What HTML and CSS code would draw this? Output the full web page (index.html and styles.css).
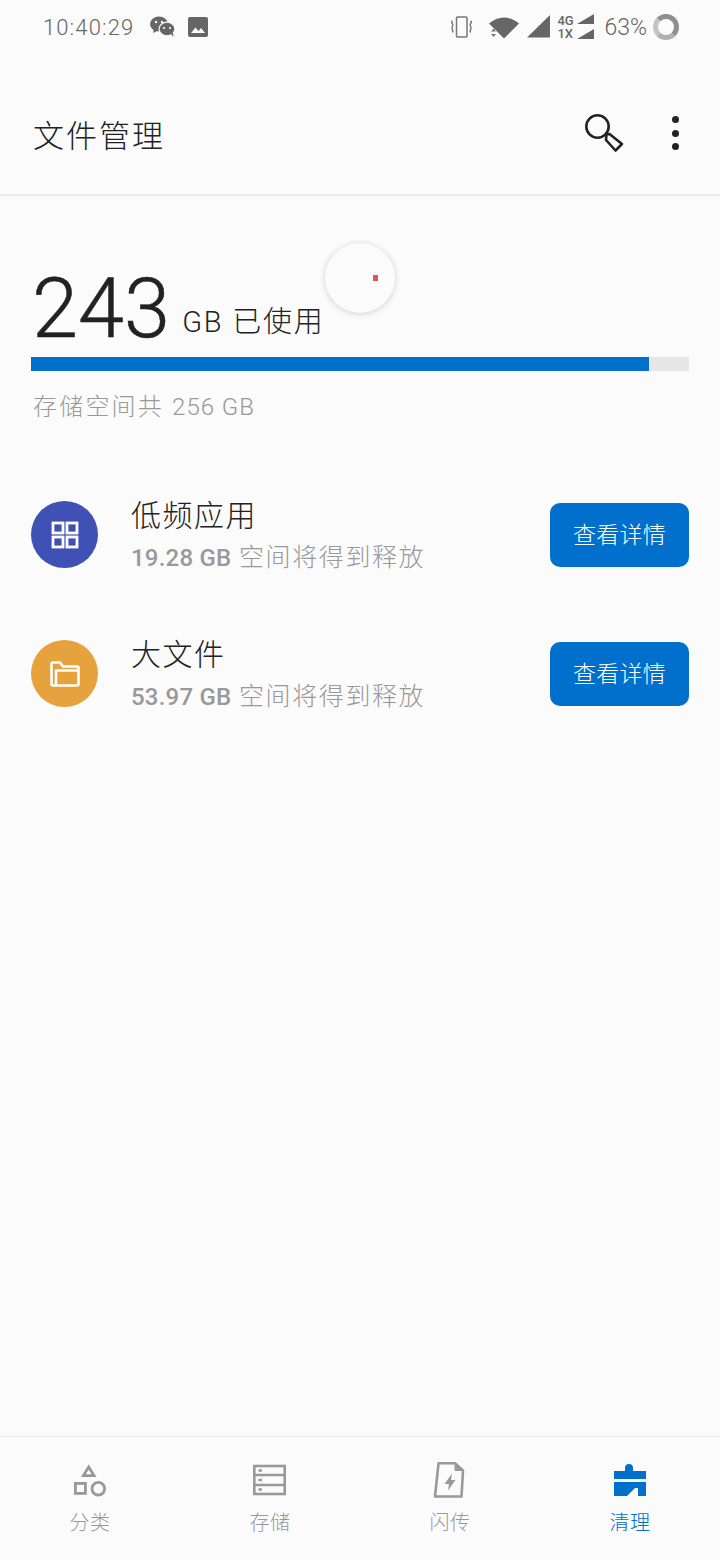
FILE: index.html
```html
<!DOCTYPE html>
<html>
<head>
    <meta charset="UTF-8"/>
    <title>文件管理</title>
    <link rel="stylesheet" href="styles.css">
</head>
<body>
<div class="page">
    <div class="status">
        <div class="status-left">
            <span class="clock">10:40:29</span>
            <svg class="ic-wechat" width="26" height="22" viewBox="0 0 26 22">
                <ellipse cx="9" cy="8" rx="9" ry="7.600" fill="#666"/>
                <path d="M4 13l-1 4 5-2.500z" fill="#666"/>
                <ellipse cx="17" cy="13" rx="8" ry="6.800" fill="#666" stroke="#fbfbfb" stroke-width="1.200"/>
                <path d="M21 18l2.500 3-.5-4.500z" fill="#666"/>
                <circle cx="6" cy="6" r="1.200" fill="#fbfbfb"/>
                <circle cx="12" cy="6" r="1.200" fill="#fbfbfb"/>
                <circle cx="14" cy="12" r="1.100" fill="#fbfbfb"/>
                <circle cx="20" cy="12" r="1.100" fill="#fbfbfb"/>
            </svg>
            <svg width="20" height="20" viewBox="0 0 20 20">
                <rect width="20" height="20" rx="2" fill="#666"/>
                <path d="M3 16l4.500-5.500 3 3.500 2.500-3 4 5z" fill="#fbfbfb"/>
            </svg>
        </div>
        <div class="status-right">
            <svg width="24" height="22" viewBox="0 0 24 22" fill="none" stroke="#777" stroke-width="1.500">
                <rect x="6.500" y="1" width="10.500" height="20" rx="1"/>
                <path d="M2.500 5c-2.500 1.500 2 3.500 0 5.500s1.500 3 0 6M20.500 5c2.500 1.500-2 3.500 0 5.500s-1.500 3 0 6"/>
            </svg>
            <svg class="ic-wifi" width="32" height="24" viewBox="0 0 32 24">
                <path d="M1 8.500C10 .5 22 .5 31 8.500L16 23.500z" fill="#666"/>
                <path d="M3 16.500l2.500-3 2.500 3zM3 19l2.500 3 2.500-3z" fill="#777"/>
            </svg>
            <svg class="ic-signal" width="24" height="24" viewBox="0 0 24 24">
                <path d="M0 22.500L23 0v22.500z" fill="#666"/>
            </svg>
            <div class="net">
                <span>4G</span><span>1X</span>
                <svg width="17" height="26" viewBox="0 0 17 26">
                    <path d="M0 10L17 0v10zM0 25l17-10v10z" fill="#666"/>
                </svg>
            </div>
            <span class="batt">63%</span>
            <div class="batt-ring"></div>
        </div>
    </div>

    <div class="header">
        <div class="title">文件管理</div>
        <div class="header-icons">
            <svg width="40" height="40" viewBox="0 0 40 40" fill="none" stroke="#222" stroke-width="2.600">
                <circle cx="13.500" cy="13.500" r="11.200"/>
                <path d="M22.500 21.500l3-.5 12.500 10-6.500 6.500L22 27z" stroke-linejoin="round"/>
            </svg>
            <div class="more"><i></i><i></i><i></i></div>
        </div>
    </div>

    <div class="main">
        <div class="usage">
            <span class="big">243</span>
            <span class="used">GB 已使用</span>
        </div>
        <div class="bar"><div class="bar-fill" style="width: 93.9%"></div></div>
        <div class="total">存储空间共 <span>256 GB</span></div>

        <div class="row">
            <div class="round blue">
                <svg width="28" height="28" viewBox="0 0 28 28" fill="none" stroke="#fff" stroke-width="2.800">
                    <rect x="2" y="2" width="10" height="10"/>
                    <rect x="16" y="2" width="10" height="10"/>
                    <rect x="2" y="16" width="10" height="10"/>
                    <rect x="16" y="16" width="10" height="10"/>
                </svg>
            </div>
            <div class="row-text">
                <div class="row-title">低频应用</div>
                <div class="row-sub"><b>19.28 GB</b> 空间将得到释放</div>
            </div>
            <div class="btn">查看详情</div>
        </div>

        <div class="row">
            <div class="round orange">
                <svg width="30" height="26" viewBox="0 0 30 26" fill="none" stroke="#fff" stroke-width="2.600" stroke-linejoin="round">
                    <path d="M1.500 23V3q0-1.500 1.500-1.500h7l3 4h14q1.500 0 1.500 1.500v16q0 1.500-1.500 1.500H3q-1.500 0-1.500-1.500z"/>
                    <path d="M6 24V9.500h22.500"/>
                </svg>
            </div>
            <div class="row-text">
                <div class="row-title">大文件</div>
                <div class="row-sub"><b>53.97 GB</b> 空间将得到释放</div>
            </div>
            <div class="btn">查看详情</div>
        </div>

        <div class="fab"><i></i></div>
    </div>

    <div class="tabs">
        <div class="tab">
            <svg width="34" height="34" viewBox="0 0 34 34" fill="none" stroke="#999" stroke-width="2.800">
                <path d="M15.700 4l5.300 8.600H10.400z"/>
                <rect x="2.400" y="20.400" width="10" height="10"/>
                <circle cx="25.300" cy="25.700" r="6.300"/>
            </svg>
            <span>分类</span>
        </div>
        <div class="tab">
            <svg width="34" height="34" viewBox="0 0 34 34" fill="none" stroke="#999" stroke-width="2.600">
                <rect x="1.300" y="3" width="30.400" height="28"/>
                <path d="M1.300 12h30.400M1.300 22h30.400"/>
                <path d="M5.500 7.500H9M5.500 17H9M5.500 26.500H9" stroke-width="2.400"/>
            </svg>
            <span>存储</span>
        </div>
        <div class="tab">
            <svg width="34" height="36" viewBox="0 0 34 36" fill="none" stroke="#999" stroke-width="2.600">
                <path d="M5.500 1.300H22L30 8.500 28.500 34.500H2z" stroke-linejoin="round"/>
                <path d="M22 1.300V8.500h8z" fill="#999" stroke-width="1"/>
                <path d="M19 11.500L11.500 22H16l-1 6.500L22.500 18H18z" fill="#999" stroke="none"/>
            </svg>
            <span>闪传</span>
        </div>
        <div class="tab on">
            <svg width="34" height="34" viewBox="0 0 34 34" fill="#0070cc">
                <circle cx="16" cy="5" r="4"/>
                <path d="M1 8h11V5h8v3h13v8H1z"/>
                <path d="M1 19h32v14h-8v-8h-3l-8 8H1z"/>
            </svg>
            <span>清理</span>
        </div>
    </div>
</div>
</body>
</html>
```

FILE: styles.css
```css
html, body {
    padding: 0;
    margin: 0;
    overflow: hidden;
}

body {
    font-family: Roboto, "Noto Sans CJK SC", sans-serif;
    background-color: #fbfbfb;
    color: #222;
}

.page {
    width: 720px;
    height: 1560px;
    display: flex;
    flex-direction: column;
}

.status {
    height: 54px;
    display: flex;
    justify-content: space-between;
    align-items: center;
    padding: 0 41px 0 43px;
}

.status-left, .status-right {
    display: flex;
    align-items: center;
}

.clock {
    font-size: 22px;
    font-weight: 300;
    color: #666;
    letter-spacing: 1.100px;
    margin-right: 16px;
}

.ic-wechat {
    margin-right: 12px;
}

.status-right svg {
    display: block;
}

.ic-wifi {
    margin: 0 7px 0 14px;
}

.ic-signal {
    margin-right: 6px;
}

.net {
    position: relative;
    width: 37px;
    height: 26px;
    display: flex;
    flex-direction: column;
    font-size: 13px;
    line-height: 13px;
    font-weight: 500;
    color: #666;
}

.net svg {
    position: absolute;
    right: 0;
    top: 0;
}

.batt {
    font-size: 23px;
    font-weight: 300;
    color: #666;
    margin: 0 6px 0 10px;
}

.batt-ring {
    width: 26px;
    height: 26px;
    box-sizing: border-box;
    border-radius: 50%;
    border: 5px solid #8e8e8e;
    border-left-color: #c4c4c4;
    border-bottom-color: #b0b0b0;
}

.header {
    height: 122px;
    padding: 18px 41px 0 33px;
    display: flex;
    justify-content: space-between;
    align-items: center;
    border-bottom: 2px solid #ececec;
}

.title {
    font-size: 31px;
    font-weight: 300;
    letter-spacing: 2px;
}

.header-icons {
    display: flex;
    align-items: center;
}

.more {
    display: flex;
    flex-direction: column;
    gap: 6.500px;
    margin-left: 48px;
}

.more i {
    display: block;
    width: 7px;
    height: 7px;
    border-radius: 50%;
    background-color: #222;
}

.main {
    flex: 1;
    position: relative;
    padding: 64px 31px 0;
}

.usage {
    height: 97px;
    display: flex;
    align-items: flex-end;
    padding-left: 1px;
}

.big {
    font-size: 83px;
    line-height: 97px;
    font-weight: 300;
    margin-right: 12px;
    -webkit-text-stroke: 0.500px #222;
}

.used {
    font-size: 29px;
    line-height: 40px;
    margin-bottom: 15px;
    font-weight: 300;
    letter-spacing: 1.800px;
}

.bar {
    height: 14px;
    background-color: #e6e6e6;
}

.bar-fill {
    height: 14px;
    background-color: #0070cc;
}

.total {
    margin: 20px 0 0 2px;
    font-size: 24px;
    line-height: 32px;
    font-weight: 300;
    color: #999;
    letter-spacing: 2.200px;
}

.total span {
    letter-spacing: 1px;
}

.row {
    display: flex;
    align-items: center;
    height: 67px;
    margin-top: 72px;
}

.total + .row {
    margin-top: 78px;
}

.round {
    width: 67px;
    height: 67px;
    border-radius: 50%;
    display: flex;
    align-items: center;
    justify-content: center;
    flex-shrink: 0;
}

.blue {
    background-color: #3f51b5;
}

.orange {
    background-color: #e6a23c;
}

.row-text {
    flex: 1;
    margin: 7px 0 0 33px;
}

.row-title {
    font-size: 30px;
    line-height: 36px;
    font-weight: 300;
    letter-spacing: 1.500px;
    margin-top: -3px;
}

.row-sub {
    font-size: 25px;
    line-height: 34px;
    font-weight: 300;
    color: #999;
    letter-spacing: 1.600px;
    margin-top: 7px;
}

.row-sub b {
    font-size: 24px;
    font-weight: 500;
    letter-spacing: 0.200px;
}

.btn {
    width: 139px;
    height: 64px;
    line-height: 66px;
    margin-top: 1px;
    text-align: center;
    background-color: #0070cc;
    border-radius: 10px;
    color: #fff;
    font-size: 23px;
    font-weight: 300;
    letter-spacing: 0.200px;
}

.fab {
    position: absolute;
    left: 325px;
    top: 47px;
    width: 70px;
    height: 70px;
    border-radius: 50%;
    background-color: #fbfbfb;
    box-shadow: 0 1px 6px rgba(0, 0, 0, 0.18);
}

.fab i {
    position: absolute;
    left: 48px;
    top: 32px;
    width: 5px;
    height: 6px;
    background-color: #e5505c;
}

.tabs {
    height: 123px;
    border-top: 1px solid #e6e6e6;
    display: grid;
    grid-template-columns: repeat(4, 1fr);
}

.tab {
    display: flex;
    flex-direction: column;
    align-items: center;
    padding-top: 25px;
    font-size: 20px;
    font-weight: 300;
    color: #999;
    letter-spacing: 0.500px;
}

.tab svg {
    height: 36px;
    display: block;
}

.tab span {
    margin-top: 10px;
    line-height: 30px;
}

.tab.on {
    color: #0070cc;
}
```
